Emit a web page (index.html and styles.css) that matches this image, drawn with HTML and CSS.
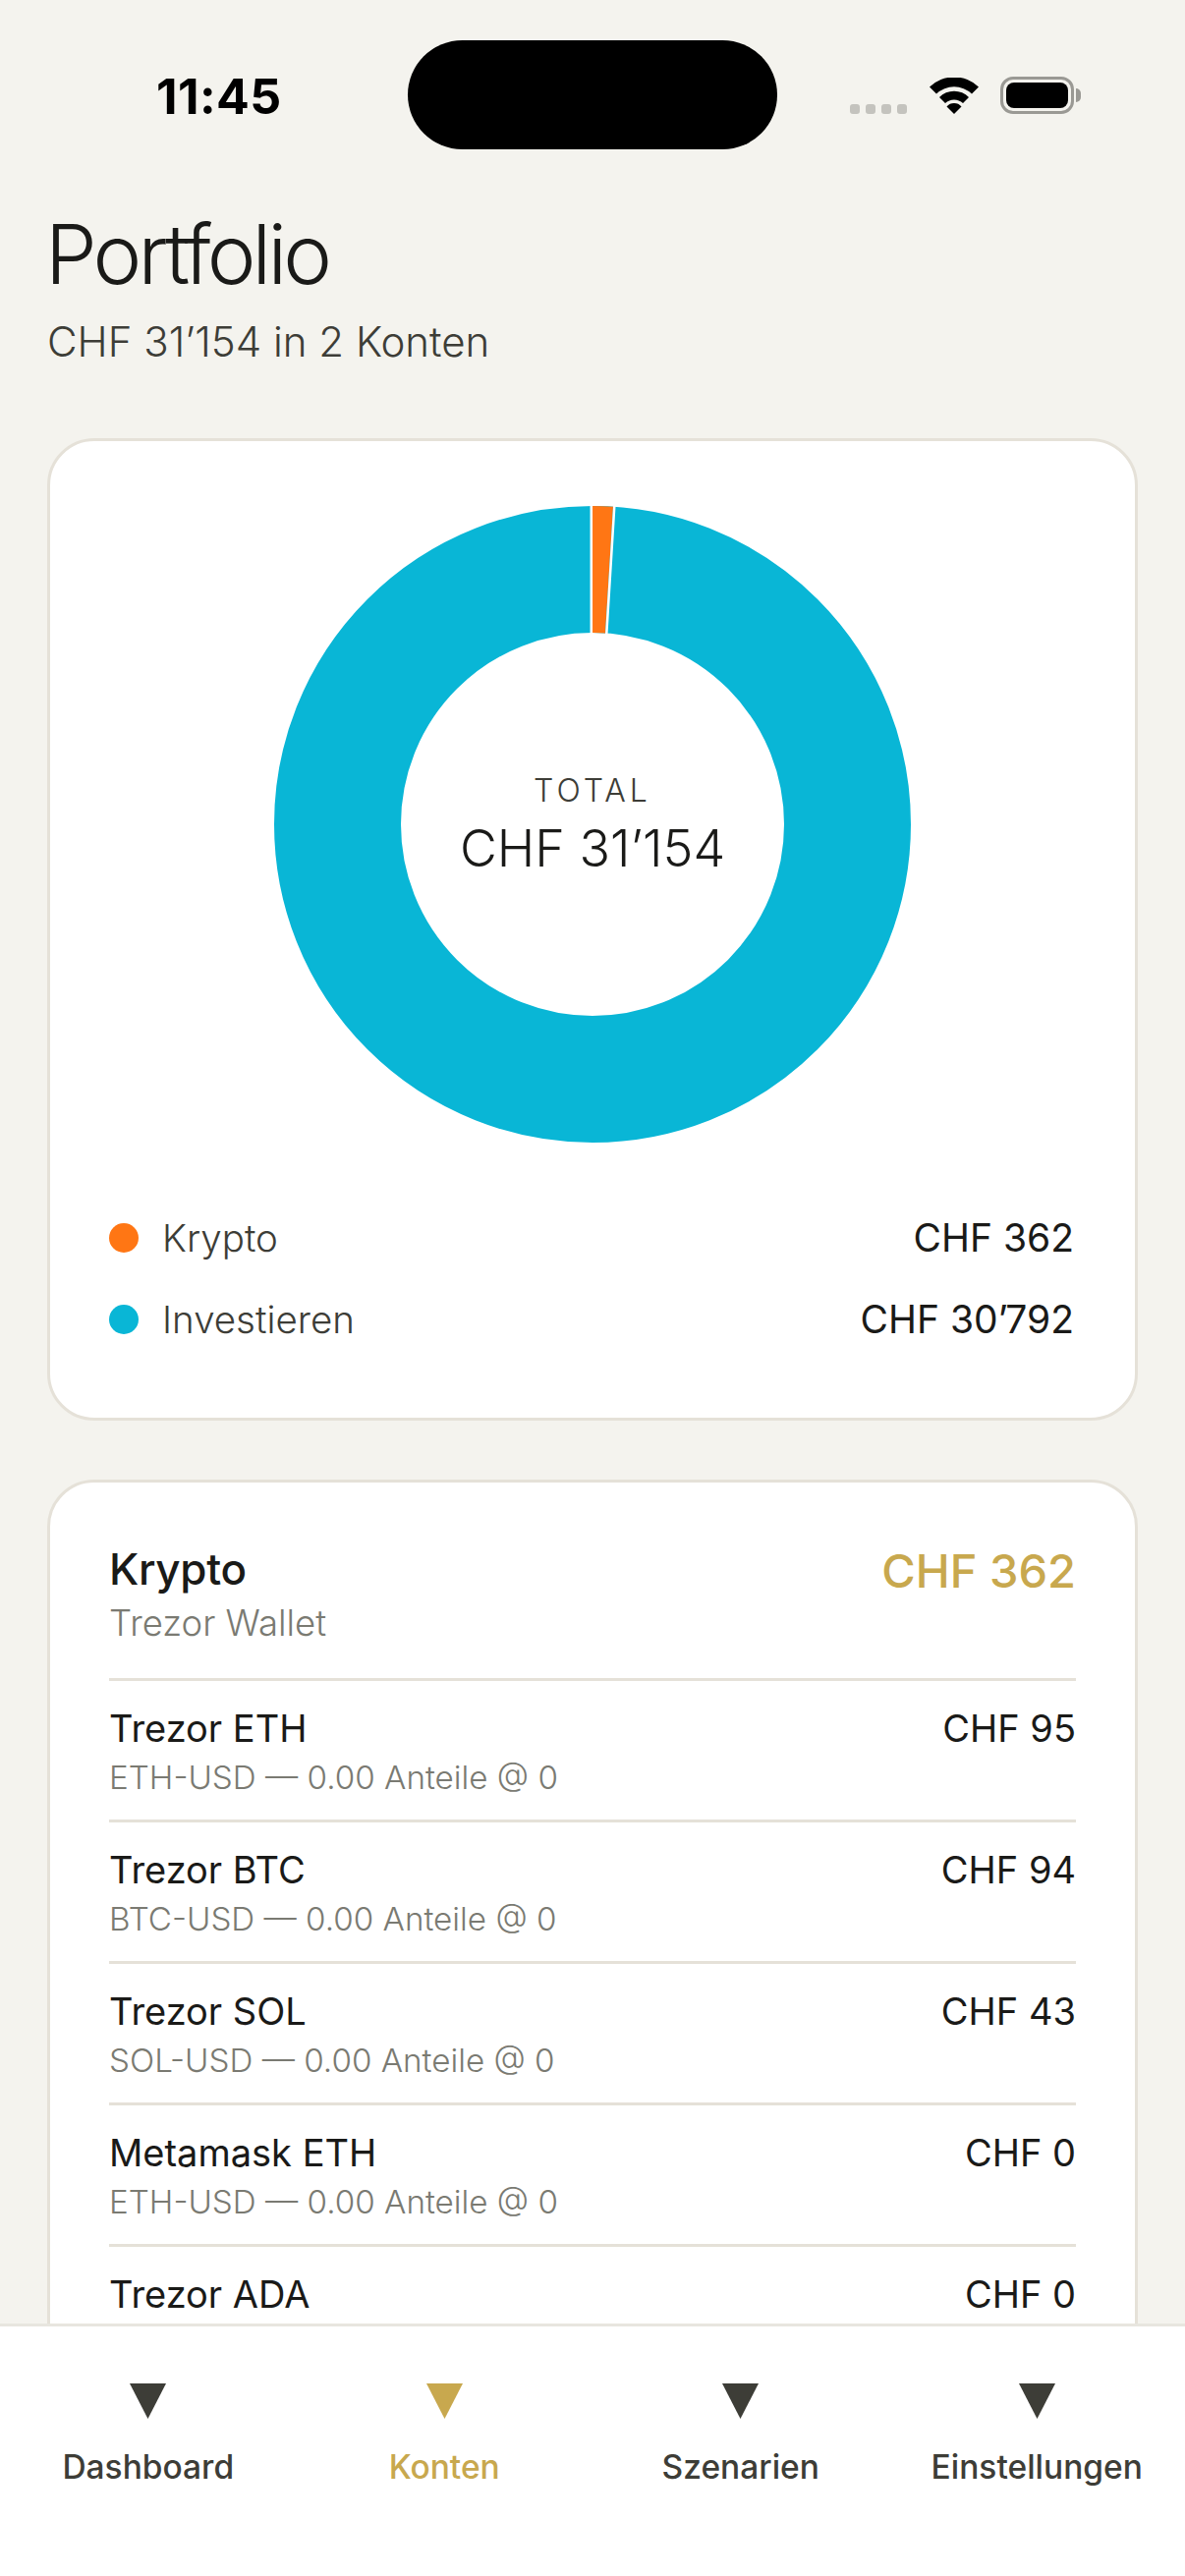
FILE: index.html
```html
<!DOCTYPE html>
<html lang="de">
<head>
  <meta charset="UTF-8" />
  <meta name="viewport" content="width=device-width, initial-scale=1" />
  <title>Portfolio</title>
  <link rel="stylesheet" href="styles.css">
</head>
<body>
  <div class="status-bar">
    <span class="time">11:45</span>
    <div class="island"></div>
    <div class="status-icons">
      <div class="signal"><i></i><i></i><i></i><i></i></div>
      <svg class="wifi" width="50" height="37" viewBox="0 0 50 37">
        <path d="M0 9.5A36 36 0 0 1 50 9.5L43 16.5A26 26 0 0 0 7 16.5Z" />
        <path d="M10 20A21 21 0 0 1 40 20L34 26A13 13 0 0 0 16 26Z" />
        <path d="M17.5 29.5A10 10 0 0 1 32.500 29.500L25 37Z" />
      </svg>
      <div class="battery"><div class="battery-fill"></div></div>
      <div class="battery-tip"></div>
    </div>
  </div>

  <main class="content">
    <h1 class="title">Portfolio</h1>
    <p class="subtitle">CHF 31’154 in 2 Konten</p>

    <section class="card chart-card">
      <div class="donut">
        <svg width="648" height="648" viewBox="0 0 648 648">
          <circle cx="324" cy="324" r="259.500" fill="none" stroke="#09b6d6" stroke-width="129" />
          <path d="M324 0A324 324 0 0 1 345 0.700L337 129.500A195 195 0 0 0 324 129Z" fill="#ff7614" />
          <path d="M322.800 0V130M346.300 0L338.300 130" fill="none" stroke="#fff" stroke-width="2.500" />
        </svg>
        <div class="donut-label">
          <span class="donut-caption">TOTAL</span>
          <span class="donut-value">CHF 31’154</span>
        </div>
      </div>
      <div class="legend">
        <div class="legend-row">
          <span class="dot dot-orange"></span>
          <span class="legend-name">Krypto</span>
          <span class="legend-value">CHF 362</span>
        </div>
        <div class="legend-row">
          <span class="dot dot-teal"></span>
          <span class="legend-name">Investieren</span>
          <span class="legend-value">CHF 30’792</span>
        </div>
      </div>
    </section>

    <section class="card account-card">
      <div class="account-head">
        <div>
          <div class="account-name">Krypto</div>
          <div class="account-sub">Trezor Wallet</div>
        </div>
        <div class="account-total">CHF 362</div>
      </div>
      <div class="position">
        <div class="position-line"><span>Trezor ETH</span><span>CHF 95</span></div>
        <div class="position-sub">ETH-USD — 0.00 Anteile @ 0</div>
      </div>
      <div class="position">
        <div class="position-line"><span>Trezor BTC</span><span>CHF 94</span></div>
        <div class="position-sub">BTC-USD — 0.00 Anteile @ 0</div>
      </div>
      <div class="position">
        <div class="position-line"><span>Trezor SOL</span><span>CHF 43</span></div>
        <div class="position-sub">SOL-USD — 0.00 Anteile @ 0</div>
      </div>
      <div class="position">
        <div class="position-line"><span>Metamask ETH</span><span>CHF 0</span></div>
        <div class="position-sub">ETH-USD — 0.00 Anteile @ 0</div>
      </div>
      <div class="position">
        <div class="position-line"><span>Trezor ADA</span><span>CHF 0</span></div>
      </div>
    </section>
  </main>

  <nav class="tabbar">
    <div class="tab">
      <svg class="tab-icon" width="37" height="36" viewBox="0 0 37 36"><path d="M0 0H37L18.500 36Z" /></svg>
      <span>Dashboard</span>
    </div>
    <div class="tab active">
      <svg class="tab-icon" width="37" height="36" viewBox="0 0 37 36"><path d="M0 0H37L18.500 36Z" /></svg>
      <span>Konten</span>
    </div>
    <div class="tab">
      <svg class="tab-icon" width="37" height="36" viewBox="0 0 37 36"><path d="M0 0H37L18.500 36Z" /></svg>
      <span>Szenarien</span>
    </div>
    <div class="tab">
      <svg class="tab-icon" width="37" height="36" viewBox="0 0 37 36"><path d="M0 0H37L18.500 36Z" /></svg>
      <span>Einstellungen</span>
    </div>
  </nav>
</body>
</html>
```

FILE: styles.css
```css
* {
  box-sizing: border-box;
}
html, body {
  margin: 0;
  height: 100%;
}
body {
  height: 100vh;
  display: flex;
  flex-direction: column;
  overflow: hidden;
  font-family: Inter, "Liberation Sans", sans-serif;
  background: #f4f3ee;
  color: #1a1a18;
}

/* status bar */
.status-bar {
  position: relative;
  flex: none;
  height: 209px;
}
.time {
  position: absolute;
  left: 159px;
  top: 68px;
  font-size: 50px;
  line-height: 60px;
  font-weight: 700;
  color: #000;
  letter-spacing: 0.4px;
}
.island {
  position: absolute;
  left: 415px;
  top: 41px;
  width: 376px;
  height: 111px;
  border-radius: 56px;
  background: #000;
}
.status-icons {
  position: absolute;
  left: 865px;
  top: 78px;
  display: flex;
  align-items: flex-end;
  height: 38px;
}
.signal {
  display: flex;
  gap: 6px;
  margin-right: 23px;
}
.signal i {
  width: 10px;
  height: 10px;
  border-radius: 3px;
  background: #c4c3be;
}
.wifi {
  fill: #000;
  margin-right: 22px;
}
.battery {
  width: 75px;
  height: 38px;
  padding: 3px;
  border: 3px solid #9a9994;
  border-radius: 13px;
}
.battery-fill {
  width: 100%;
  height: 100%;
  border-radius: 8px;
  background: #000;
}
.battery-tip {
  width: 5px;
  height: 14px;
  margin: 0 0 12px 2px;
  border-radius: 0 5px 5px 0;
  background: #9a9994;
}

/* main */
.content {
  flex: 1;
  min-height: 0;
  overflow: hidden;
  padding: 0 48px;
}
.title {
  margin: 0 0 0 -2px;
  font-size: 84px;
  line-height: 100px;
  font-weight: 300;
  letter-spacing: -3.8px;
}
.subtitle {
  margin: 14px 0 73px;
  font-size: 42px;
  line-height: 50px;
  font-weight: 300;
  color: #3d3d37;
}
.card {
  background: #fff;
  border: 3px solid #e5e1d8;
  border-radius: 48px;
  padding: 0 60px;
}
.chart-card {
  height: 1000px;
  padding-top: 66px;
  margin-bottom: 60px;
}

.donut {
  position: relative;
  width: 648px;
  height: 648px;
  margin: 0 auto;
}
.donut svg {
  display: block;
}
.donut-label {
  position: absolute;
  left: 0;
  right: 0;
  top: 270px;
  display: flex;
  flex-direction: column;
  align-items: center;
}
.donut-caption {
  font-size: 32px;
  line-height: 40px;
  letter-spacing: 4px;
  font-weight: 300;
  color: #3d3d37;
}
.donut-value {
  margin-top: 6px;
  font-size: 52px;
  line-height: 66px;
  font-weight: 300;
}

.legend {
  margin-top: 55px;
}
.legend-row {
  display: flex;
  align-items: center;
  height: 83px;
  font-size: 38.500px;
}
.dot {
  width: 30px;
  height: 30px;
  border-radius: 50%;
  margin-right: 24px;
}
.dot-orange {
  background: #ff7614;
}
.dot-teal {
  background: #09b6d6;
}
.legend-name {
  flex: 1;
  font-weight: 300;
  color: #3d3d37;
}
.legend-value {
  font-size: 39px;
  font-weight: 400;
  margin-right: 2px;
}

.account-head {
  display: flex;
  justify-content: space-between;
  padding-top: 61px;
  height: 199px;
}
.account-name {
  font-size: 44px;
  line-height: 54px;
  font-weight: 500;
  letter-spacing: -0.3px;
}
.account-sub {
  margin-top: 6px;
  font-size: 36.500px;
  line-height: 44px;
  font-weight: 300;
  color: #7a7a72;
}
.account-total {
  margin-top: 2px;
  font-size: 47px;
  line-height: 54px;
  font-weight: 500;
  color: #c8a84e;
}
.position {
  height: 144px;
  padding-top: 26px;
  border-top: 3px solid #e5e1d8;
}
.position-line {
  display: flex;
  justify-content: space-between;
  font-size: 38px;
  line-height: 44px;
}
.position-sub {
  margin-top: 8px;
  font-size: 33.200px;
  line-height: 40px;
  font-weight: 300;
  color: #7a7a72;
}

/* tab bar */
.tabbar {
  flex: none;
  height: 257px;
  display: grid;
  grid-template-columns: repeat(4, 1fr);
  padding: 58px 0 0;
  background: #fff;
  border-top: 3px solid #e8e6df;
}
.tab {
  display: flex;
  flex-direction: column;
  align-items: center;
  font-size: 33.500px;
  line-height: 40px;
  font-weight: 500;
  color: #3d3d37;
  white-space: nowrap;
}
.tab-icon {
  fill: #3d3d37;
  margin-bottom: 29px;
}
.tab.active {
  color: #c8a84e;
}
.tab.active .tab-icon {
  fill: #c8a84e;
}
```
